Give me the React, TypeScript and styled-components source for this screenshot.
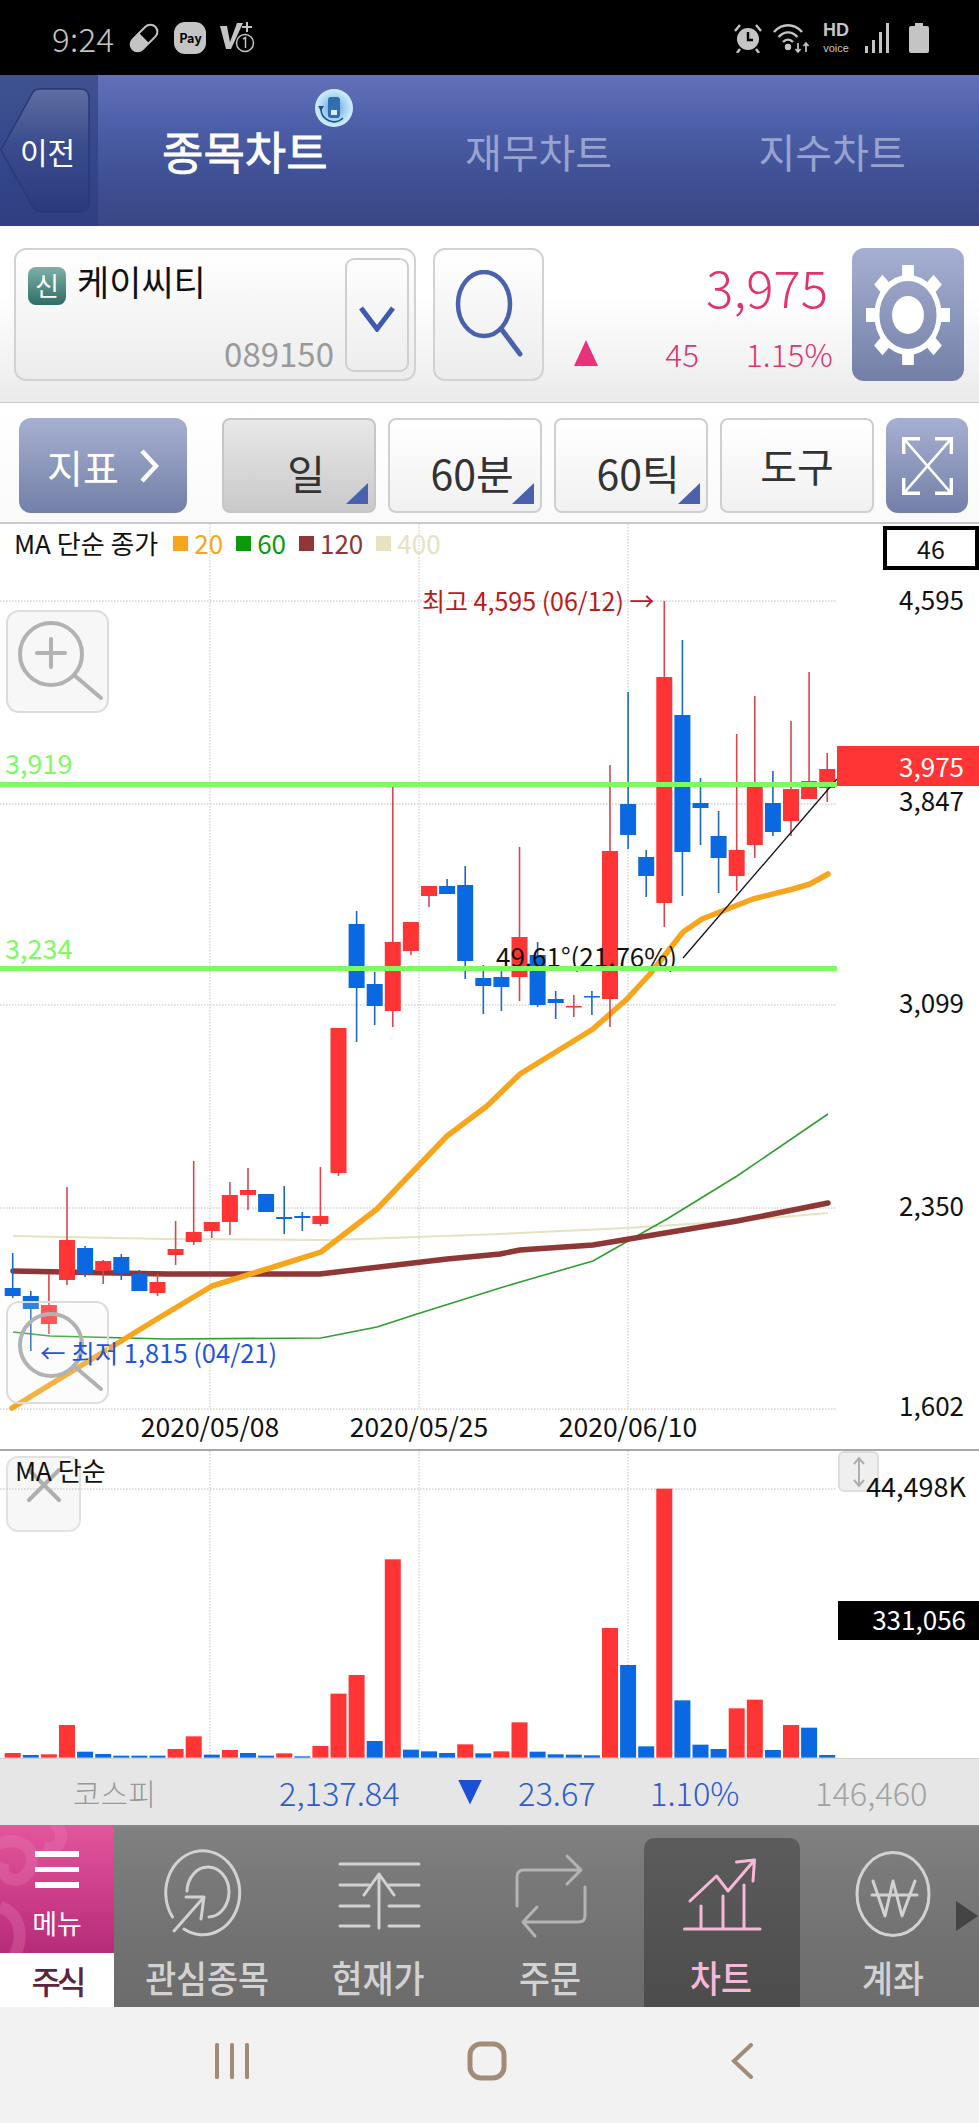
import React from "react";
import styled, { createGlobalStyle } from "styled-components";

const FONT = `"Noto Sans CJK KR", "Noto Sans", sans-serif`;

const Global = createGlobalStyle`
  html, body { margin: 0; padding: 0; background: #fff; }
  body { font-family: ${FONT}; }
  * { box-sizing: border-box; }
`;

const Page = styled.div`
  width: 979px;
  height: 2123px;
  display: flex;
  flex-direction: column;
  overflow: hidden;
  background: #fff;
`;

/* ---------- status bar ---------- */
const StatusBar = styled.div`
  height: 75px;
  flex: none;
  background: #000;
  color: #c4c4c4;
  display: flex;
  align-items: center;
  justify-content: space-between;
  padding: 0 50px 0 52px;
`;
const StatusGroup = styled.div<{ $gap: number }>`
  display: flex;
  align-items: center;
  gap: ${(p) => p.$gap}px;
`;
const Time = styled.span`
  font-size: 33px;
  font-weight: 300;
  line-height: 40px;
  letter-spacing: 0.3px;
`;
const PayBadge = styled.span`
  width: 32px;
  height: 32px;
  border-radius: 11px;
  background: #c4c4c4;
  color: #000;
  font-size: 12.5px;
  font-weight: 700;
  display: flex;
  align-items: center;
  justify-content: center;
`;
const VoiceMark = styled.span`
  display: flex;
  flex-direction: column;
  align-items: center;
  gap: 3px;
  width: 30px;
  font-family: "Liberation Sans", sans-serif;
`;
const VoiceHd = styled.span`
  font-size: 18px;
  font-weight: 700;
  line-height: 17px;
`;
const VoiceSub = styled.span`
  font-size: 11px;
  line-height: 12px;
`;

/* ---------- header ---------- */
const Header = styled.header`
  height: 151px;
  flex: none;
  position: relative;
  display: flex;
  background: linear-gradient(180deg, #6271b9 0%, #4c5ea8 35%, #3f4f93 70%, #3a4785 100%);
`;
const PrevPanel = styled.div`
  width: 98px;
  flex: none;
  position: relative;
  background: linear-gradient(180deg, #3f528f 0%, #33458c 60%, #2f3f80 100%);
`;
const PrevShape = styled.svg`
  position: absolute;
  left: 0;
  top: 13px;
`;
const PrevLabel = styled.span`
  position: absolute;
  left: 20px;
  top: 55px;
  font-size: 30px;
  line-height: 42px;
  color: #fff;
`;
const Tabs = styled.nav`
  flex: 1;
  display: grid;
  grid-template-columns: repeat(3, 1fr);
  align-items: center;
`;
const Tab = styled.span<{ $active?: boolean }>`
  text-align: center;
  font-size: ${(p) => (p.$active ? 45 : 40)}px;
  font-weight: 400;
  -webkit-text-stroke: ${(p) => (p.$active ? "0.8px #fff" : "0")};
  color: ${(p) => (p.$active ? "#fff" : "#98a3cf")};
  line-height: 54px;
`;
const SyncBadge = styled.svg`
  position: absolute;
  left: 315px;
  top: 14px;
`;

/* ---------- stock row ---------- */
const StockRow = styled.section`
  height: 177px;
  flex: none;
  display: flex;
  gap: 17px;
  padding: 22px 15px 0 14px;
  background: linear-gradient(180deg, #fff 0%, #fff 40%, #ebebeb 100%);
  border-bottom: 1px solid #c9c9c9;
`;
const StockBox = styled.div`
  width: 402px;
  height: 133px;
  flex: none;
  position: relative;
  border: 2px solid #d2d2d2;
  border-radius: 12px;
  background: linear-gradient(180deg, #fff 0%, #ececec 100%);
  padding: 10px 0 0 12px;
  display: flex;
  align-items: flex-start;
  gap: 11px;
`;
const NewBadge = styled.span`
  width: 38px;
  height: 38px;
  margin-top: 7px;
  border-radius: 8px;
  background: linear-gradient(180deg, #7fb0a8 0%, #2d6e66 100%);
  color: #fff;
  font-size: 26px;
  line-height: 36px;
  text-align: center;
`;
const StockName = styled.span`
  font-size: 35px;
  line-height: 42px;
  color: #111;
`;
const StockCode = styled.span`
  position: absolute;
  right: 80px;
  bottom: 8px;
  font-size: 33px;
  line-height: 36px;
  color: #9a9a9a;
`;
const DropButton = styled.div`
  position: absolute;
  right: 5px;
  top: 8px;
  width: 64px;
  height: 114px;
  border: 2px solid #cfcfcf;
  border-radius: 9px;
  display: flex;
  align-items: center;
  justify-content: center;
  padding-top: 8px;
`;
const SearchButton = styled.div`
  width: 111px;
  height: 133px;
  flex: none;
  border: 2px solid #d2d2d2;
  border-radius: 12px;
  background: linear-gradient(180deg, #fff 0%, #ececec 100%);
  display: flex;
  align-items: center;
  justify-content: center;
`;
const PriceBlock = styled.div`
  flex: 1;
  height: 133px;
  display: flex;
  flex-direction: column;
  justify-content: space-between;
  color: #e0336f;
  padding-right: 7px;
`;
const Price = styled.div`
  text-align: right;
  font-size: 51px;
  font-weight: 300;
  line-height: 60px;
  margin-top: 8px;
`;
const ChangeRow = styled.div`
  display: grid;
  grid-template-columns: 1fr auto 82px;
  align-items: center;
  font-size: 31.5px;
  font-weight: 300;
  line-height: 36px;
  margin-bottom: 10px;
  padding-left: 13px;
  column-gap: 47px;
  white-space: nowrap;
`;
const UpMark = styled.i`
  width: 24px;
  height: 26px;
  display: block;
  background: #e8327c;
  clip-path: polygon(50% 0, 100% 100%, 0 100%);
`;
const BlueButton = styled.div<{ $w: number; $h: number }>`
  width: ${(p) => p.$w}px;
  height: ${(p) => p.$h}px;
  flex: none;
  border-radius: 12px;
  background: linear-gradient(180deg, #a5b0d1 0%, #747fa8 100%);
  display: flex;
  align-items: center;
  justify-content: center;
`;

/* ---------- tool row ---------- */
const ToolRow = styled.section`
  height: 121px;
  flex: none;
  display: flex;
  gap: 12px;
  padding: 15px 0 0 19px;
  border-bottom: 2px solid #c9c9c9;
  background: linear-gradient(180deg, #fff 0%, #fafafa 100%);
`;
const IndicatorButton = styled(BlueButton)`
  margin-right: 23px;
  gap: 20px;
  color: #fff;
  font-size: 39px;
  line-height: 46px;
`;
const ToolButton = styled.div<{ $active?: boolean; $menu?: boolean }>`
  width: 154px;
  height: 95px;
  flex: none;
  position: relative;
  border: 2px solid ${(p) => (p.$active ? "#c6c6c6" : "#cfcfcf")};
  border-radius: 8px;
  background: ${(p) =>
    p.$active ? "linear-gradient(180deg, #e8e8e8 0%, #c9c9c9 100%)" : "linear-gradient(180deg, #fff 0%, #f1f1f1 100%)"};
  color: #333;
  font-size: ${(p) => (p.$menu ? 41 : 40)}px;
  line-height: 46px;
  display: flex;
  align-items: center;
  justify-content: center;
  padding: ${(p) => (p.$menu ? "12px 0 0 14px" : "0 0 2px 0")};
`;
const CornerMark = styled.i`
  position: absolute;
  right: 6px;
  bottom: 7px;
  width: 22px;
  height: 21px;
  background: #4a62ae;
  clip-path: polygon(100% 0, 100% 100%, 0 100%);
`;

/* ---------- chart ---------- */
const ChartPanel = styled.section`
  height: 925px;
  flex: none;
  position: relative;
  background: #fff;
`;
const VolumePanel = styled.section`
  height: 309px;
  flex: none;
  position: relative;
  background: #fff;
  border-top: 2px solid #a8a8a8;
`;
const Plot = styled.svg`
  display: block;
  position: absolute;
  left: 0;
  top: 0;
`;
const Legend = styled.div`
  position: absolute;
  left: 14px;
  top: 1px;
  display: flex;
  align-items: center;
  font-size: 26px;
  line-height: 36px;
`;
const LegendTitle = styled.span`
  color: #111;
  margin-right: 15px;
`;
const LegendSwatch = styled.i<{ $c: string }>`
  width: 15px;
  height: 15px;
  background: ${(p) => p.$c};
  margin-right: 6px;
`;
const LegendValue = styled.span<{ $c: string }>`
  color: ${(p) => p.$c};
  margin-right: 13px;
`;
const RangeBox = styled.div`
  position: absolute;
  right: 0;
  top: 2px;
  width: 96px;
  height: 44px;
  border: 4px solid #000;
  font-size: 25px;
  line-height: 36px;
  text-align: center;
  color: #111;
  background: #fff;
`;
const ZoomButton = styled.div<{ $top: number; $faded?: boolean }>`
  position: absolute;
  left: 6px;
  top: ${(p) => p.$top}px;
  width: 103px;
  height: 103px;
  border: 2px solid #dcdcdc;
  border-radius: 13px;
  background: ${(p) => (p.$faded ? "rgba(240,240,240,0.18)" : "#f7f7f7")};
  display: flex;
  align-items: center;
  justify-content: center;
`;
const LowLabel = styled.span`
  position: absolute;
  left: 40px;
  top: 809px;
  font-size: 25.5px;
  line-height: 38px;
  color: #1f55d8;
  white-space: nowrap;
`;
const VolumeTitle = styled.span`
  position: absolute;
  left: 15px;
  top: 1px;
  font-size: 26px;
  line-height: 36px;
  color: #111;
`;
const CloseButton = styled.div`
  position: absolute;
  left: 6px;
  top: 5px;
  width: 75px;
  height: 76px;
  border: 2px solid #e2e2e2;
  border-radius: 12px;
  background: #f7f7f7;
  display: flex;
  align-items: center;
  justify-content: center;
  padding-bottom: 18px;
`;
const SizeButton = styled.div`
  position: absolute;
  left: 838px;
  top: 0;
  width: 41px;
  height: 41px;
  border: 2px solid #dedede;
  border-radius: 6px;
  background: #efefef;
  display: flex;
  align-items: center;
  justify-content: center;
`;
const AxisText = styled.text<{ $c?: string; $s?: number }>`
  font-family: ${FONT};
  font-size: ${(p) => p.$s ?? 25}px;
  fill: ${(p) => p.$c ?? "#111"};
`;

/* ---------- kospi ---------- */
const KospiBar = styled.section`
  height: 67px;
  flex: none;
  display: grid;
  grid-template-columns: 206px 179px 60px 132px 165px auto;
  align-items: center;
  padding-left: 73px;
  background: #e6e6e6;
  border-top: 1px solid #d0d0d0;
  color: #2f5ccb;
  font-size: 32.5px;
  font-weight: 300;
  line-height: 40px;
`;
const KospiName = styled.span`
  font-size: 30px;
  color: #999;
`;
const KospiVolume = styled.span`
  color: #a2a2a2;
`;
const DownMark = styled.i`
  width: 24px;
  height: 25px;
  display: block;
  background: #1c4fd6;
  clip-path: polygon(0 0, 100% 0, 50% 100%);
`;

/* ---------- bottom menu ---------- */
const BottomNav = styled.nav`
  height: 182px;
  flex: none;
  position: relative;
  display: flex;
  background: linear-gradient(180deg, #8b8b8b 0, #808080 3px, #727272 60%, #6c6c6c 100%);
`;
const MenuColumn = styled.div`
  width: 114px;
  flex: none;
  display: flex;
  flex-direction: column;
`;
const MenuPink = styled.div`
  height: 128px;
  flex: none;
  position: relative;
  overflow: hidden;
  background: linear-gradient(180deg, #e2569c 0%, #cf3f8b 50%, #b52c78 100%);
  display: flex;
  flex-direction: column;
  align-items: center;
  padding-top: 26px;
  color: #fff;
`;
const MenuSwirl = styled.svg`
  position: absolute;
  left: 0;
  top: 0;
`;
const MenuBars = styled.div`
  width: 44px;
  height: 37px;
  position: relative;
  border-top: 6px solid #fff;
  border-bottom: 6px solid #fff;
  &::after {
    content: "";
    position: absolute;
    left: 0;
    right: 0;
    top: 10px;
    height: 5px;
    background: #fff;
  }
`;
const MenuText = styled.span`
  position: relative;
  font-size: 27px;
  line-height: 32px;
  margin-top: 19px;
`;
const MenuStock = styled.div`
  flex: 1;
  background: #fff;
  color: #5a2640;
  font-size: 32px;
  font-weight: 500;
  line-height: 54px;
  text-align: center;
  letter-spacing: -4px;
`;
const NavItems = styled.div`
  flex: 1;
  display: flex;
  gap: 15.5px;
  padding: 13px 0 0 15px;
`;
const NavItem = styled.div<{ $active?: boolean }>`
  width: 156px;
  flex: none;
  display: flex;
  flex-direction: column;
  align-items: center;
  padding-top: 6px;
  border-radius: 10px 10px 0 0;
  background: ${(p) => (p.$active ? "linear-gradient(180deg, #5c5c5c, #4c4c4c)" : "transparent")};
  color: ${(p) => (p.$active ? "#f7b8d8" : "#d2d2d2")};
`;
const NavLabel = styled.span`
  font-size: 37px;
  font-weight: 500;
  line-height: 50px;
  margin-top: 8px;
  white-space: nowrap;
  transform: scaleX(0.91);
`;
const MoreArrow = styled.i`
  position: absolute;
  right: 1px;
  top: 76px;
  width: 22px;
  height: 30px;
  background: #444;
  clip-path: polygon(0 0, 100% 50%, 0 100%);
`;

/* ---------- system nav ---------- */
const SystemNav = styled.footer`
  flex: 1;
  background: #f2f2f2;
  display: flex;
  align-items: center;
  justify-content: center;
  padding: 0 6px 0 0;
`;
const SystemSlot = styled.div`
  width: 255px;
  display: flex;
  justify-content: center;
  margin-top: -8px;
`;

/* ---------- data ---------- */
const RED = "#ff3535";
const BLUE = "#0a69e0";
const candles: [string, number, number, number, number][] = [
  ["b", 1254, 1289, 1297, 1299], ["b", 1292, 1297, 1310, 1352], ["r", 1275, 1306, 1325, 1335], ["r", 1188, 1241, 1281, 1286],
  ["b", 1247, 1249, 1275, 1278], ["r", 1261, 1262, 1272, 1285], ["b", 1255, 1258, 1274, 1281], ["b", 1271, 1275, 1292, 1292],
  ["r", 1275, 1283, 1294, 1297], ["r", 1222, 1250, 1256, 1266], ["r", 1162, 1233, 1243, 1246], ["r", 1223, 1223, 1232, 1239],
  ["r", 1183, 1196, 1223, 1236], ["r", 1169, 1191, 1196, 1211], ["b", 1195, 1195, 1213, 1213], ["b", 1187, 1218, 1220, 1235],
  ["b", 1213, 1217, 1219, 1232], ["r", 1168, 1217, 1225, 1227], ["r", 1029, 1029, 1174, 1177], ["b", 912, 925, 989, 1043],
  ["b", 973, 985, 1007, 1026], ["r", 788, 943, 1012, 1028], ["r", 923, 923, 952, 956], ["r", 887, 887, 897, 908],
  ["b", 880, 887, 895, 895], ["b", 867, 886, 962, 980], ["b", 966, 979, 987, 1015], ["b", 967, 978, 988, 1012],
  ["r", 848, 938, 978, 1002], ["b", 943, 956, 1006, 1008], ["b", 992, 1000, 1004, 1020], ["r", 996, 1007, 1008, 1018],
  ["b", 992, 997, 998, 1016], ["r", 766, 852, 1000, 1028], ["b", 693, 805, 836, 850], ["b", 851, 858, 877, 898],
  ["r", 602, 678, 904, 928], ["b", 641, 716, 853, 897], ["b", 779, 804, 809, 846], ["b", 812, 837, 859, 894],
  ["r", 735, 851, 877, 892], ["r", 697, 787, 846, 859], ["b", 772, 804, 833, 837], ["r", 722, 790, 822, 837],
  ["r", 673, 782, 800, 800], ["r", 754, 770, 789, 803],
];
const volumes: [string, number][] = [
  ["r", 942], ["b", 948], ["r", 946], ["r", 858], ["b", 938], ["b", 945], ["b", 950], ["b", 950], ["b", 950], ["r", 930],
  ["r", 892], ["b", 947], ["r", 933], ["b", 942], ["b", 950], ["r", 943], ["b", 952], ["r", 921], ["r", 764], ["r", 708],
  ["b", 906], ["r", 361], ["b", 932], ["b", 937], ["b", 942], ["r", 916], ["b", 943], ["r", 937], ["r", 850], ["b", 938],
  ["b", 946], ["b", 947], ["b", 949], ["r", 567], ["b", 678], ["b", 922], ["r", 149], ["b", 784], ["b", 917], ["b", 930],
  ["r", 808], ["r", 782], ["b", 933], ["r", 858], ["b", 866], ["b", 948],
];
const cx = (i: number) => 12.7 + 18.1 * i;
const ma20 = "12,1409 157,1320 212,1287 283,1265 321,1253 377,1210 447,1137 487,1107 520,1075 593,1030 627,1000 650,975 683,933 702,920 753,900 793,890 810,885 828,875";
const ma60 = "13,1333 50,1337 167,1340 321,1339 377,1328 417,1315 500,1289 520,1283 593,1262 628,1242 667,1220 737,1177 828,1115";
const ma120 = "13,1272 167,1275 320,1275 447,1260 500,1255 520,1251 593,1246 647,1237 737,1222 773,1215 828,1204";
const ma400 = "13,1237 167,1240 333,1241 500,1235 627,1229 737,1222 828,1214";
const hGrid = [602, 805, 1006, 1209, 1410];
const vGrid = [210, 419, 628];

const MagnifierPlus = ({ plus }: { plus?: boolean }) => (
  <svg width="92" height="84" viewBox="0 0 92 84" fill="none" stroke="#b2b2b2" strokeWidth="4" strokeLinecap="round">
    <circle cx="39" cy="34" r="31" />
    <path d="M62 55L89 78" />
    {plus && <path d="M39 19V47M25 33H53" />}
  </svg>
);

const NavIconSvg = ({ children, dim }: { children: React.ReactNode; dim?: boolean }) => (
  <svg width="100" height="100" viewBox="0 0 100 100" fill="none" stroke={dim ? "#b4b4b4" : "currentColor"} strokeWidth="3" strokeLinecap="round" strokeLinejoin="round">
    {children}
  </svg>
);

export default function App() {
  return (
    <Page>
      <Global />
      <StatusBar>
        <StatusGroup $gap={13}>
          <Time>9:24</Time>
          <svg width="34" height="34" viewBox="0 0 34 34">
            <g transform="rotate(45 17 17)">
              <rect x="10" y="1" width="14" height="32" rx="7" fill="#000" stroke="#c4c4c4" strokeWidth="2" />
              <path d="M10 17h14v9a7 7 0 0 1-14 0z" fill="#c4c4c4" />
            </g>
          </svg>
          <PayBadge>Pay</PayBadge>
          <svg width="36" height="36" viewBox="0 0 36 36" fill="#c4c4c4">
            <path d="M1 6h7l3 16L18 3h6L12 29H7z" />
            <path d="M28 2v10M23 7h10" stroke="#c4c4c4" strokeWidth="2" />
            <circle cx="26" cy="23" r="8.5" fill="#000" stroke="#c4c4c4" strokeWidth="1.5" />
            <path d="M24 19l2.5-1.5V28" fill="none" stroke="#c4c4c4" strokeWidth="1.5" />
          </svg>
        </StatusGroup>
        <StatusGroup $gap={10}>
          <svg width="30" height="30" viewBox="0 0 30 30" fill="#c4c4c4">
            <circle cx="15" cy="16" r="11" />
            <path d="M15 9v8h5" fill="none" stroke="#000" strokeWidth="2.4" />
            <path d="M2 8l5-6M28 8l-5-6M7 26l-3 4M23 26l3 4" stroke="#c4c4c4" strokeWidth="2.4" />
          </svg>
          <svg width="38" height="30" viewBox="0 0 38 30" fill="none" stroke="#c4c4c4" strokeWidth="2.4">
            <path d="M1 9C9 0 21 0 29 9M5.5 14c6-6 13-6 19 0M10 19c3-3 7-3 10 0" />
            <circle cx="15" cy="24" r="2" fill="#c4c4c4" />
            <path d="M25 20v9M22.5 26l2.5 3 2.5-3M33 29v-9M30.5 23l2.5-3 2.5 3" strokeWidth="1.7" />
          </svg>
          <VoiceMark>
            <VoiceHd>HD</VoiceHd>
            <VoiceSub>voice</VoiceSub>
          </VoiceMark>
          <svg width="27" height="30" viewBox="0 0 27 30" fill="#c4c4c4" style={{ marginLeft: 3 }}>
            <rect x="1" y="23" width="3" height="7" />
            <rect x="8" y="17" width="3" height="13" />
            <rect x="15" y="9" width="3" height="21" />
            <rect x="22" y="0" width="3" height="30" />
          </svg>
          <svg width="20" height="30" viewBox="0 0 20 30" fill="#c4c4c4" style={{ marginLeft: 8 }}>
            <rect x="6" y="0" width="8" height="4" />
            <rect x="0" y="3" width="20" height="27" rx="2" />
          </svg>
        </StatusGroup>
      </StatusBar>

      <Header>
        <PrevPanel>
          <PrevShape width="92" height="126" viewBox="0 0 92 126">
            <defs>
              <linearGradient id="prevFill" x1="0" y1="0" x2="0" y2="1">
                <stop offset="0" stopColor="#5f6ea3" />
                <stop offset="0.45" stopColor="#3b4c8e" />
                <stop offset="1" stopColor="#2a3a7e" />
              </linearGradient>
            </defs>
            <path d="M1 62L33 4Q35 1 40 1H80Q89 1 89 10V114Q89 124 80 124H42Q36 124 33 119Z" fill="url(#prevFill)" stroke="#2a3875" strokeWidth="1.5" />
          </PrevShape>
          <PrevLabel>이전</PrevLabel>
        </PrevPanel>
        <Tabs>
          <Tab $active>종목차트</Tab>
          <Tab>재무차트</Tab>
          <Tab>지수차트</Tab>
        </Tabs>
        <SyncBadge width="38" height="38" viewBox="0 0 38 38">
          <defs>
            <radialGradient id="syncFill">
              <stop offset="0" stopColor="#5f8fd4" />
              <stop offset="0.6" stopColor="#a6d3f3" />
              <stop offset="1" stopColor="#d4eefc" />
            </radialGradient>
          </defs>
          <circle cx="19" cy="19" r="19" fill="url(#syncFill)" />
          <rect x="13" y="8" width="12" height="21" rx="3" fill="#2f6fb0" />
          <rect x="16" y="21" width="6" height="5" fill="#d4eefc" />
          <path d="M6 19a13 13 0 0 0 22 10" fill="none" stroke="#1c4f8f" strokeWidth="1.6" />
          <path d="M3 17h6l-3 5z" fill="#1c4f8f" />
        </SyncBadge>
      </Header>

      <StockRow>
        <StockBox>
          <NewBadge>신</NewBadge>
          <StockName>케이씨티</StockName>
          <StockCode>089150</StockCode>
          <DropButton>
            <svg width="36" height="26" viewBox="0 0 36 26" fill="none" stroke="#3f5bb0" strokeWidth="5">
              <path d="M2 2L18 23L34 2" />
            </svg>
          </DropButton>
        </StockBox>
        <SearchButton>
          <svg width="70" height="90" viewBox="0 0 70 90" fill="none" stroke="#4a62ae" strokeWidth="4.5" strokeLinecap="round">
            <ellipse cx="30" cy="34" rx="26" ry="32" />
            <path d="M48 60L66 84" strokeWidth="5" />
          </svg>
        </SearchButton>
        <PriceBlock>
          <Price>3,975</Price>
          <ChangeRow>
            <UpMark />
            <span>45</span>
            <span>1.15%</span>
          </ChangeRow>
        </PriceBlock>
        <BlueButton $w={112} $h={133}>
          <svg width="84" height="100" viewBox="0 0 100 100" preserveAspectRatio="none" fill="#fff">
            {[0, 45, 90, 135, 180, 225, 270, 315].map((a) => (
              <rect key={a} x="43" y="0" width="14" height="14" transform={`rotate(${a} 50 50)`} />
            ))}
            <circle cx="50" cy="50" r="37" fill="none" stroke="#fff" strokeWidth="6" />
            <circle cx="50" cy="50" r="19" />
          </svg>
        </BlueButton>
      </StockRow>

      <ToolRow>
        <IndicatorButton $w={168} $h={95}>
          <span>지표</span>
          <svg width="20" height="34" viewBox="0 0 20 34" fill="none" stroke="#fff" strokeWidth="4.5">
            <path d="M3 2L17 17L3 32" />
          </svg>
        </IndicatorButton>
        <ToolButton $active $menu>
          일
          <CornerMark />
        </ToolButton>
        <ToolButton $menu>
          60분
          <CornerMark />
        </ToolButton>
        <ToolButton $menu>
          60틱
          <CornerMark />
        </ToolButton>
        <ToolButton>도구</ToolButton>
        <BlueButton $w={82} $h={95}>
          <svg width="51" height="58" viewBox="0 0 51 58" fill="none" stroke="#fff" strokeWidth="3.4">
            <path d="M1.7 17V1.7H18M33 1.7H49.3V17M1.7 41V56.3H18M33 56.3H49.3V41" />
            <path d="M1.7 1.7L49.3 56.3M49.3 1.7L1.7 56.3" strokeWidth="2.6" />
          </svg>
        </BlueButton>
      </ToolRow>

      <ChartPanel>
        <Plot width="979" height="925" viewBox="0 525 979 925">
          {hGrid.map((y) => (
            <line key={y} x1="0" x2="837" y1={y} y2={y} stroke="#bdbdbd" strokeWidth="1" strokeDasharray="1.5 1.5" />
          ))}
          {vGrid.map((x) => (
            <line key={x} x1={x} x2={x} y1="525" y2="1410" stroke="#c4c4c4" strokeWidth="1" strokeDasharray="1.5 1.5" />
          ))}
          <polyline points={ma400} fill="none" stroke="#e6e2c2" strokeWidth="2" />
          <polyline points={ma60} fill="none" stroke="#2f9e2f" strokeWidth="1.6" />
          <polyline points={ma120} fill="none" stroke="#8f3636" strokeWidth="5.5" strokeLinecap="round" />
          <polyline points={ma20} fill="none" stroke="#f7a51d" strokeWidth="5.5" strokeLinecap="round" strokeLinejoin="round" />
          {candles.map(([c, hi, top, bot, lo], i) => (
            <g key={i}>
              <line x1={cx(i)} x2={cx(i)} y1={hi} y2={lo} stroke={c === "r" ? "#d8474f" : "#1a68c8"} strokeWidth="1.6" />
              <rect x={cx(i) - 8} y={top} width="16" height={Math.max(bot - top, 1.5)} fill={c === "r" ? RED : BLUE} />
            </g>
          ))}
          <AxisText x="496" y="968" $s={26}>49.61°(21.76%)</AxisText>
          <line x1="683" y1="959" x2="837" y2="780" stroke="#111" strokeWidth="1.3" />
          <rect x="0" y="783" width="837" height="5" fill="#7dfb60" />
          <rect x="0" y="967" width="837" height="5" fill="#7dfb60" />
          <AxisText x="5" y="775" $c="#7dfb60" $s={27}>3,919</AxisText>
          <AxisText x="5" y="960" $c="#7dfb60" $s={27}>3,234</AxisText>
          <AxisText x="422" y="612" $c="#b81c1c">최고 4,595 (06/12) →</AxisText>
          {[["2020/05/08", 210], ["2020/05/25", 419], ["2020/06/10", 628]].map(([t, x]) => (
            <AxisText key={t as string} x={x as number} y="1438" textAnchor="middle" $s={26.5}>{t}</AxisText>
          ))}
          <rect x="837" y="747" width="142" height="40" fill={RED} />
          {[["4,595", 611], ["3,847", 812], ["3,099", 1014], ["2,350", 1217], ["1,602", 1417]].map(([t, y]) => (
            <AxisText key={t as string} x="964" y={y as number} textAnchor="end" $s={26}>{t}</AxisText>
          ))}
          <AxisText x="964" y="778" textAnchor="end" $c="#fff" $s={26}>3,975</AxisText>
        </Plot>
        <Legend>
          <LegendTitle>MA 단순 종가</LegendTitle>
          <LegendSwatch $c="#f7a51d" />
          <LegendValue $c="#f7a51d">20</LegendValue>
          <LegendSwatch $c="#0a9a0a" />
          <LegendValue $c="#0a9a0a">60</LegendValue>
          <LegendSwatch $c="#8f3636" />
          <LegendValue $c="#8f3636">120</LegendValue>
          <LegendSwatch $c="#e6e2c2" />
          <LegendValue $c="#e6e2c2">400</LegendValue>
        </Legend>
        <RangeBox>46</RangeBox>
        <ZoomButton $top={86}>
          <MagnifierPlus plus />
        </ZoomButton>
        <ZoomButton $top={777} $faded>
          <MagnifierPlus />
        </ZoomButton>
        <LowLabel>← 최저 1,815 (04/21)</LowLabel>
      </ChartPanel>

      <VolumePanel>
        <CloseButton>
          <svg width="36" height="36" viewBox="0 0 36 36" fill="none" stroke="#aeaeae" strokeWidth="4" strokeLinecap="round">
            <path d="M3 3L33 33M33 3L3 33" />
          </svg>
        </CloseButton>
        <SizeButton>
          <svg width="14" height="32" viewBox="0 0 14 32" fill="none" stroke="#aeaeae" strokeWidth="2">
            <path d="M7 2V30M2 8L7 2L12 8M2 24L7 30L12 24" />
          </svg>
        </SizeButton>
        <Plot width="979" height="307" viewBox="0 1452 979 307">
          <line x1="0" x2="837" y1="1490" y2="1490" stroke="#bdbdbd" strokeWidth="1" strokeDasharray="1.5 1.5" />
          {vGrid.map((x) => (
            <line key={x} x1={x} x2={x} y1="1452" y2="1759" stroke="#c4c4c4" strokeWidth="1" strokeDasharray="1.5 1.5" />
          ))}
          {volumes.map(([c, v], i) => (
            <rect key={i} x={cx(i) - 8} y={1440 + v / 3} width="16" height={(956 - v) / 3} fill={c === "r" ? RED : BLUE} />
          ))}
          <rect x="838" y="1602" width="141" height="39" fill="#000" />
          <AxisText x="966" y="1498" textAnchor="end" $s={27}>44,498K</AxisText>
          <AxisText x="966" y="1631" textAnchor="end" $c="#fff" $s={26}>331,056</AxisText>
        </Plot>
        <VolumeTitle>MA 단순</VolumeTitle>
      </VolumePanel>

      <KospiBar>
        <KospiName>코스피</KospiName>
        <span>2,137.84</span>
        <DownMark />
        <span>23.67</span>
        <span>1.10%</span>
        <KospiVolume>146,460</KospiVolume>
      </KospiBar>

      <BottomNav>
        <MenuColumn>
          <MenuPink>
            <MenuSwirl width="114" height="128" viewBox="0 0 114 128" fill="none" stroke="#ea7fb6" strokeWidth="12" opacity="0.3">
              <path d="M-6 20C20 10 38 22 30 44C22 62 -2 56 4 38" />
              <path d="M0 82C18 88 26 108 14 132" />
              <path d="M52 -6C70 14 58 26 44 22" />
            </MenuSwirl>
            <MenuBars />
            <MenuText>메뉴</MenuText>
          </MenuPink>
          <MenuStock>주식</MenuStock>
        </MenuColumn>
        <NavItems>
          <NavItem>
            <NavIconSvg>
              <path d="M27 85A37 42 0 1 0 15.5 73" />
              <path d="M52 73A21 25 0 1 0 30 47" />
              <path d="M17 87L47 53M29 53H47L44 75" />
            </NavIconSvg>
            <NavLabel>관심종목</NavLabel>
          </NavItem>
          <NavItem>
            <NavIconSvg>
              <path d="M11 20H90M11 41H40M60 41H90M11 62H40M60 62H90M11 82H40M60 82H90" />
              <path d="M50 84V30M35 51L50 30L65 51" />
            </NavIconSvg>
            <NavLabel>현재가</NavLabel>
          </NavItem>
          <NavItem>
            <NavIconSvg dim>
              <path d="M17 62V33Q17 26 24 26H80M67 12L81 26L67 40" />
              <path d="M85 43V72Q85 78 78 78H23M37 63L23 78L35 92" />
            </NavIconSvg>
            <NavLabel>주문</NavLabel>
          </NavItem>
          <NavItem $active>
            <NavIconSvg>
              <path d="M18 57L44.5 32L56 47L82.5 16M64.5 18L82.5 16L81 37" />
              <path d="M29 62V85M51 52V85M72 41V85M12.5 85H88" />
            </NavIconSvg>
            <NavLabel>차트</NavLabel>
          </NavItem>
          <NavItem>
            <NavIconSvg>
              <ellipse cx="50" cy="50" rx="36" ry="41.5" />
              <path d="M30 37L42 72L50 37L59 72L72 37M29 51H74" />
            </NavIconSvg>
            <NavLabel>계좌</NavLabel>
          </NavItem>
        </NavItems>
        <MoreArrow />
      </BottomNav>

      <SystemNav>
        <SystemSlot>
          <svg width="36" height="36" viewBox="0 0 36 36" fill="#a08c78">
            <rect x="1" y="0" width="4" height="36" rx="1.5" />
            <rect x="16" y="0" width="4" height="36" rx="1.5" />
            <rect x="31" y="0" width="4" height="36" rx="1.5" />
          </svg>
        </SystemSlot>
        <SystemSlot>
          <svg width="40" height="40" viewBox="0 0 40 40" fill="none" stroke="#a08c78" strokeWidth="5">
            <rect x="3" y="3" width="34" height="34" rx="11" />
          </svg>
        </SystemSlot>
        <SystemSlot>
          <svg width="22" height="36" viewBox="0 0 22 36" fill="none" stroke="#a08c78" strokeWidth="4" strokeLinecap="round">
            <path d="M20 2L3 18L20 34" />
          </svg>
        </SystemSlot>
      </SystemNav>
    </Page>
  );
}
